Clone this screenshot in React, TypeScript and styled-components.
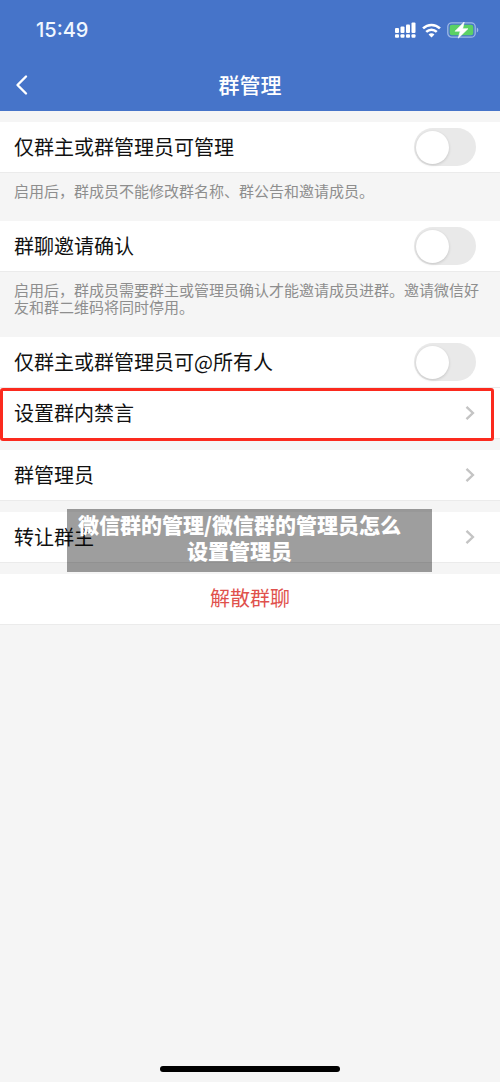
import React from 'react';
import styled, { createGlobalStyle } from 'styled-components';

const GlobalStyle = createGlobalStyle`
  *, *::before, *::after { box-sizing: border-box; }
  body {
    margin: 0;
    background: #f5f5f5;
    font-family: 'Noto Sans CJK SC', sans-serif;
  }
`;

const Page = styled.div`
  position: relative;
  display: flex;
  flex-direction: column;
  min-height: 100vh;
  background: #f5f5f5;
`;

const Header = styled.header`
  background: #4674c9;
  color: #fff;
`;

const StatusBar = styled.div`
  display: flex;
  align-items: center;
  justify-content: space-between;
  height: 60px;
  padding: 0 20px 0 36px;
`;

const Clock = styled.time`
  font: 500 20px/24px Inter, sans-serif;
  color: #f0f7ff;
`;

const StatusIcons = styled.div`
  display: flex;
  align-items: center;
  gap: 6px;
`;

const NavBar = styled.div`
  display: grid;
  grid-template-columns: 48px 1fr 48px;
  align-items: center;
  height: 51px;
  padding-bottom: 2px;
`;

const BackButton = styled.button`
  display: flex;
  align-items: center;
  height: 48px;
  padding: 0 0 0 15px;
  border: 0;
  background: none;
  color: inherit;
`;

const Title = styled.h1`
  margin: 0;
  padding-bottom: 2px;
  font-size: 21px;
  font-weight: 500;
  line-height: 30px;
  text-align: center;
`;

const Settings = styled.main`
  display: flex;
  flex-direction: column;
  padding-top: 11px;
`;

const Group = styled.section<{ $spaced?: boolean }>`
  margin-bottom: ${(p) => (p.$spaced ? 11 : 0)}px;
`;

const rowStyle = `
  display: flex;
  align-items: center;
  justify-content: space-between;
  width: 100%;
  height: 51px;
  padding: 0 24px 0 14px;
  border: 0;
  border-bottom: 1px solid #ebebeb;
  background: #fff;
  color: #111;
  font-family: inherit;
  font-size: 20px;
  line-height: 28px;
  text-align: left;
`;

const ToggleRow = styled.label`
  ${rowStyle}
`;

const LinkRow = styled.button`
  ${rowStyle}
`;

const DangerRow = styled.button`
  ${rowStyle}
  justify-content: center;
  padding: 0 0 2px;
  color: #e0514c;
`;

const Switch = styled.input`
  appearance: none;
  flex: none;
  width: 62px;
  height: 38px;
  margin: 0;
  padding: 3px 2px;
  border-radius: 19px;
  background: #e9e9e9;

  &::before {
    content: '';
    display: block;
    width: 33px;
    height: 33px;
    border-radius: 50%;
    background: #fff;
    box-shadow: 0 1px 3px rgba(0, 0, 0, 0.16);
  }

  &:checked { background: #4674c9; }
  &:checked::before { margin-left: 25px; }
`;

const Hint = styled.p`
  margin: 0;
  padding: 9px 20px 22px 14px;
  color: #8e8e8e;
  font-size: 15px;
  line-height: 17px;
`;

const Highlighted = styled.div`
  position: relative;

  &::after {
    content: '';
    position: absolute;
    inset: 0 6px -2px 0;
    border: 3px solid #fb2a1e;
    border-radius: 3px;
    pointer-events: none;
  }
`;

const Caption = styled.div`
  position: absolute;
  top: 509px;
  left: 67px;
  right: 68px;
  padding: 2px 22px 9px 2px;
  background: rgba(0, 0, 0, 0.38);
  color: #fff;
  font-size: 21px;
  font-weight: 900;
  line-height: 26px;
  text-align: center;
`;

const HomeIndicator = styled.div`
  width: 36%;
  height: 6px;
  margin: auto auto 10px;
  border-radius: 3px;
  background: #000;
`;

const SignalIcon = () => (
  <svg width="21" height="16" viewBox="0 0 21 16" fill="#fff" aria-hidden="true">
    <rect x="0" y="6" width="4" height="5" rx="1" />
    <rect x="5.5" y="4.5" width="4" height="6.5" rx="1" />
    <rect x="11" y="2.5" width="4" height="8.5" rx="1" />
    <rect x="16.5" y="0.5" width="4" height="10.5" rx="1" />
    <rect x="0" y="12.3" width="4" height="3.5" rx="1" />
    <rect x="5.5" y="12.3" width="4" height="3.5" rx="1" />
    <rect x="11" y="12.3" width="4" height="3.5" rx="1" />
    <rect x="16.5" y="12.3" width="4" height="3.5" rx="1" />
  </svg>
);

const WifiIcon = () => (
  <svg width="19" height="15" viewBox="0 0 18 14" fill="none" stroke="#fff" strokeWidth="2.4" aria-hidden="true">
    <path d="M1 5C5.5 .6 12.500 .6 17 5" />
    <path d="M4 8.300C6.900 5.500 11.100 5.500 14 8.300" />
    <path d="M6.200 10.700C7.800 9.200 10.200 9.200 11.800 10.700L9 13.600Z" fill="#fff" stroke="none" />
  </svg>
);

const BatteryIcon = () => (
  <svg width="33" height="18" viewBox="0 0 33 18" aria-hidden="true">
    <rect x="0.8" y="1.800" width="27.400" height="14.400" rx="4" fill="none" stroke="#9db8e6" strokeWidth="1.300" />
    <rect x="2.700" y="3.700" width="23.600" height="10.600" rx="2.200" fill="#5bd165" />
    <path d="M29.800 6.500C31.800 7.200 31.800 10.800 29.800 11.500Z" fill="#9db8e6" />
    <path d="M17.200 1L8 10.200H13.200L11.200 17.200L21 7.700H15.700Z" fill="#fff" stroke="#fff" strokeWidth=".6" strokeLinejoin="round" />
  </svg>
);

const BackIcon = () => (
  <svg width="14" height="22" viewBox="0 0 14 22" fill="none" stroke="#fff" strokeWidth="2.400" strokeLinecap="round" strokeLinejoin="round" aria-hidden="true">
    <path d="M11 2.500L2.500 11L11 19.500" />
  </svg>
);

const Chevron = () => (
  <svg width="11" height="16" viewBox="0 0 11 16" fill="none" stroke="#c4c4c4" strokeWidth="2.400" aria-hidden="true">
    <path d="M1.500 1.800L7.900 8L1.500 14.200" />
  </svg>
);

const Toggle = ({ label }: { label: string }) => (
  <ToggleRow>
    {label}
    <Switch type="checkbox" />
  </ToggleRow>
);

const Link = ({ label }: { label: string }) => (
  <LinkRow type="button">
    {label}
    <Chevron />
  </LinkRow>
);

export default function App() {
  return (
    <Page>
      <GlobalStyle />
      <Header>
        <StatusBar>
          <Clock>15:49</Clock>
          <StatusIcons>
            <SignalIcon />
            <WifiIcon />
            <BatteryIcon />
          </StatusIcons>
        </StatusBar>
        <NavBar>
          <BackButton type="button" aria-label="返回">
            <BackIcon />
          </BackButton>
          <Title>群管理</Title>
        </NavBar>
      </Header>
      <Settings>
        <Group>
          <Toggle label="仅群主或群管理员可管理" />
          <Hint>启用后，群成员不能修改群名称、群公告和邀请成员。</Hint>
        </Group>
        <Group>
          <Toggle label="群聊邀请确认" />
          <Hint>启用后，群成员需要群主或管理员确认才能邀请成员进群。邀请微信好友和群二维码将同时停用。</Hint>
        </Group>
        <Group $spaced>
          <Toggle label="仅群主或群管理员可@所有人" />
          <Highlighted>
            <Link label="设置群内禁言" />
          </Highlighted>
        </Group>
        <Group $spaced>
          <Link label="群管理员" />
        </Group>
        <Group $spaced>
          <Link label="转让群主" />
        </Group>
        <Group>
          <DangerRow type="button">解散群聊</DangerRow>
        </Group>
      </Settings>
      <Caption>微信群的管理/微信群的管理员怎么设置管理员</Caption>
      <HomeIndicator />
    </Page>
  );
}
